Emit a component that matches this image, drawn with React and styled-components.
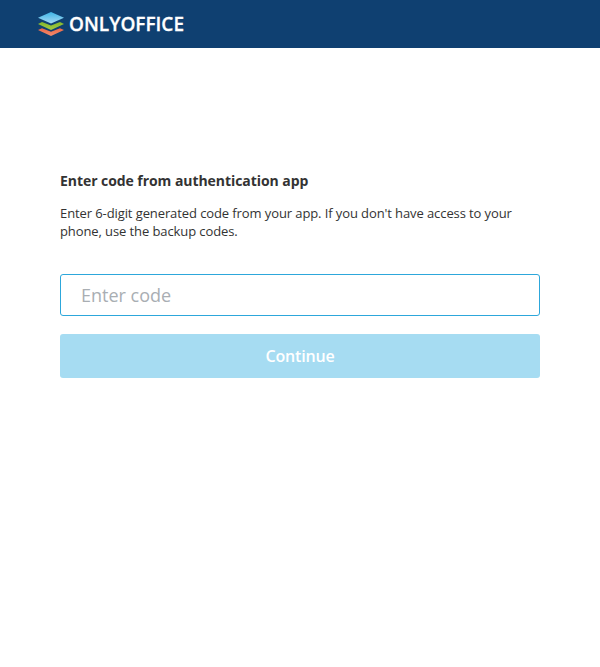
import React from "react";
import styled, { createGlobalStyle } from "styled-components";

const GlobalStyle = createGlobalStyle`
  * { box-sizing: border-box; }
  body { margin: 0; background: #fff; color: #333; font-family: "Open Sans", sans-serif; }
`;
const Header = styled.header`
  height: 48px;
  display: flex;
  align-items: center;
  padding-left: 37px;
  background: #0f4071;
`;
const Mark = styled.svg`
  display: block;
  width: 28px;
  height: 26px;
`;
const Wordmark = styled.svg`
  display: block;
  width: 130px;
  height: 40px;
  margin-left: 4px;
  overflow: visible;
`;
const Main = styled.main`
  padding: 123px 60px 0;
`;
const Title = styled.h1`
  margin: 0;
  font-size: 14px;
  line-height: 19px;
  font-weight: 700;
  letter-spacing: -0.06px;
`;
const Text = styled.p`
  margin: 14px 0 0;
  font-size: 13px;
  line-height: 18px;
  letter-spacing: -0.097px;
`;
const Form = styled.form`
  display: grid;
  gap: 18px;
  margin-top: 34px;
`;
const CodeInput = styled.input`
  width: 100%;
  height: 42px;
  padding: 0 20px;
  border: 1px solid #2da7db;
  border-radius: 3px;
  outline: none;
  font: 400 18px "Open Sans", sans-serif;
  &::placeholder { color: #a9aeb3; font-weight: 400; opacity: 1; }
`;
const Button = styled.button`
  height: 44px;
  border: 0;
  border-radius: 3px;
  background: #a6dcf2;
  color: #fff;
  font: 600 16px "Open Sans", sans-serif;
  letter-spacing: -0.15px;
`;

export default function App() {
  return (
    <>
      <GlobalStyle />
      <Header>
        <Mark viewBox="0 0 28 26">
          <defs>
            <linearGradient id="sky" x1="0" y1="0" x2="0" y2="1">
              <stop offset="0" stopColor="#3db4e6" />
              <stop offset="1" stopColor="#a8daf3" />
            </linearGradient>
            <linearGradient id="leaf" x1="0" y1="0" x2="0" y2="1">
              <stop offset="0" stopColor="#83b62c" />
              <stop offset="1" stopColor="#a5cc42" />
            </linearGradient>
            <linearGradient id="coral" x1="0" y1="0" x2="0" y2="1">
              <stop offset="0" stopColor="#ed6745" />
              <stop offset="1" stopColor="#f28c70" />
            </linearGradient>
          </defs>
          <path d="M1 19 5 17.2 14 20.8 23 17.2 27 19 14 25.1Z" fill="url(#coral)" />
          <path d="M1 13 5 11 14 14.5 23 11 27 13 14 19.1Z" fill="url(#leaf)" />
          <path d="M14 1 27 6.8 14 12.6 1 6.8Z" fill="url(#sky)" />
        </Mark>
        <Wordmark viewBox="0 0 130 40">
          <text x="0" y="27" fontSize="20" fontWeight="600" fill="#fff" stroke="#fff" strokeWidth="0.3" textLength="115" lengthAdjust="spacingAndGlyphs">ONLYOFFICE</text>
        </Wordmark>
      </Header>
      <Main>
        <Title>Enter code from authentication app</Title>
        <Text>Enter 6-digit generated code from your app. If you don't have access to your phone, use the backup codes.</Text>
        <Form>
          <CodeInput placeholder="Enter code" />
          <Button type="button">Continue</Button>
        </Form>
      </Main>
    </>
  );
}
